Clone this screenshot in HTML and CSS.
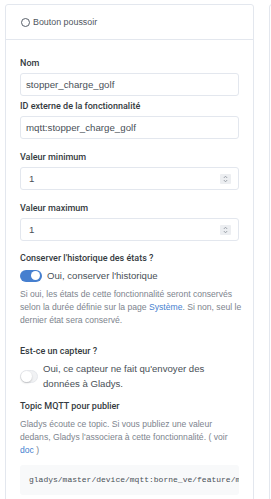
FILE: index.html
```html
<!DOCTYPE html>
<html lang="fr">
  <head>
    <meta charset="UTF-8" />
    <meta name="viewport" content="width=device-width, initial-scale=1.0" />
    <title>Fonctionnalité MQTT</title>
    <link rel="stylesheet" href="styles.css">
  </head>
  <body>
    <div class="kort">
      <div class="kort-top">
        <span class="radio"></span>
        <span>Bouton poussoir</span>
      </div>
      <div class="kort-indhold">
        <label class="felt-navn">Nom</label>
        <div class="felt felt-tæt">stopper_charge_golf</div>

        <label class="felt-navn">ID externe de la fonctionnalité</label>
        <div class="felt">mqtt:stopper_charge_golf</div>

        <label class="felt-navn">Valeur minimum</label>
        <div class="felt tal">
          <span>1</span>
          <span class="pile"><svg width="5" height="8" viewBox="0 0 5 8"><path d="M0.8 3 L2.5 1.2 L4.2 3 M0.8 5 L2.5 6.8 L4.2 5" fill="none" stroke="#8a9099" stroke-width="0.8"/></svg></span>
        </div>

        <label class="felt-navn">Valeur maximum</label>
        <div class="felt tal">
          <span>1</span>
          <span class="pile"><svg width="5" height="8" viewBox="0 0 5 8"><path d="M0.8 3 L2.5 1.2 L4.2 3 M0.8 5 L2.5 6.8 L4.2 5" fill="none" stroke="#8a9099" stroke-width="0.8"/></svg></span>
        </div>

        <label class="felt-navn afsnit">Conserver l'historique des états ?</label>
        <div class="kontakt-linje">
          <span class="kontakt til"></span>
          <span>Oui, conserver l'historique</span>
        </div>
        <p class="hjælp">Si oui, les états de cette fonctionnalité seront conservés<br>selon la durée définie sur la page <a href="#">Système</a>. Si non, seul le<br>dernier état sera conservé.</p>

        <label class="felt-navn capteur">Est-ce un capteur ?</label>
        <div class="kontakt-linje fra-linje">
          <span class="kontakt fra"></span>
          <span>Oui, ce capteur ne fait qu'envoyer des<br>données à Gladys.</span>
        </div>

        <label class="felt-navn topic">Topic MQTT pour publier</label>
        <p class="hjælp">Gladys écoute ce topic. Si vous publiez une valeur<br>dedans, Gladys l'associera à cette fonctionnalité. ( voir<br><a href="#">doc</a> )</p>
        <pre class="kode">gladys/master/device/mqtt:borne_ve/feature/mqtt:stopper_charge_golf/state</pre>
      </div>
    </div>
    <div class="kort tom"></div>
  </body>
</html>
```
FILE: styles.css
```css
* {
  box-sizing: border-box;
  margin: 0;
}
html {
  overflow: hidden;
}
body {
  display: flex;
  gap: 15px;
  padding: 4px 0 0 5px;
  background-color: white;
  font-family: "Liberation Sans", Arial, sans-serif;
  color: #495057;
  overflow: hidden;
  height: 499px;
}
/*---kort---*/
.kort {
  flex-shrink: 0;
  width: 249px;
  height: 520px;
  border: 1px solid #e3e7ee;
  border-radius: 3px;
  background-color: white;
}
.kort.tom {
  width: 200px;
}
.kort-top {
  display: flex;
  align-items: center;
  gap: 3px;
  height: 35px;
  padding-left: 15px;
  border-bottom: 1px solid #e3e7ee;
  font-size: 8.9px;
  color: #4f565e;
}
.radio {
  width: 9px;
  height: 9px;
  border: 1px solid #59606a;
  border-radius: 50%;
}
.kort-indhold {
  padding: 17px 14px 0 14px;
}
/*---felter---*/
.felt-navn {
  display: block;
  font-family: Roboto, "Liberation Sans", sans-serif;
  font-size: 9px;
  font-weight: 500;
  line-height: 13px;
  margin-bottom: 3px;
  color: #343a40;
  white-space: nowrap;
}
.felt {
  display: flex;
  align-items: center;
  justify-content: space-between;
  height: 23px;
  padding: 0 7px 0 5px;
  border: 1px solid #e3e7ee;
  border-radius: 3px;
  font-size: 9.7px;
  color: #495057;
  margin-bottom: 12px;
}
.felt-tæt {
  margin-bottom: 4px;
}
.tal span:first-child {
  padding-left: 3px;
}
.pile {
  display: flex;
  align-items: center;
  justify-content: center;
  width: 11px;
  height: 10px;
  background-color: #eceef1;
  border-radius: 1px;
}
.afsnit {
  margin-top: -1px;
}
/*---kontakter---*/
.kontakt-linje {
  display: flex;
  align-items: center;
  gap: 5px;
  margin-top: 3px;
  font-size: 9.6px;
  line-height: 15px;
  color: #495057;
  white-space: nowrap;
}
.kontakt {
  position: relative;
  flex-shrink: 0;
  border-radius: 7px;
}
.til {
  width: 22px;
  height: 12px;
  background-color: #467fcf;
}
.til::after {
  content: "";
  position: absolute;
  right: 2px;
  top: 1.5px;
  width: 9px;
  height: 9px;
  border-radius: 50%;
  background-color: white;
}
.fra {
  width: 18px;
  height: 13px;
  background-color: #f1f2f4;
  border: 1px solid #e6e8ec;
}
.fra::after {
  content: "";
  position: absolute;
  left: 0;
  top: 0;
  width: 11px;
  height: 11px;
  border-radius: 50%;
  background-color: white;
  box-shadow: 0 1px 2px rgba(0, 0, 0, 0.2);
}
/*---tekst---*/
.hjælp {
  margin-top: 5px;
  font-size: 8.6px;
  line-height: 13px;
  color: #7d848e;
  white-space: nowrap;
}
.hjælp a {
  color: #467fcf;
  text-decoration: none;
}
.capteur {
  margin-top: 18px;
}
.topic {
  margin-top: 9px;
}
.kode {
  margin-top: 8px;
  height: 30px;
  padding: 0 0 0 9px;
  background-color: #f8f9fa;
  border-radius: 3px;
  font-family: "Liberation Mono", "DejaVu Sans Mono", monospace;
  font-size: 8px;
  line-height: 30px;
  color: #495057;
  overflow: hidden;
}
```
